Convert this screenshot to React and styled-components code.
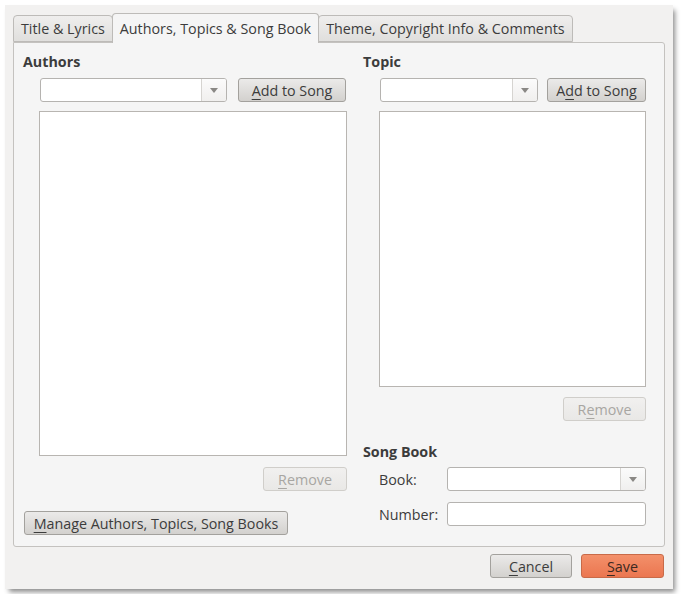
import styled, { createGlobalStyle, css } from "styled-components"

const Global = createGlobalStyle`
  body {
    margin: 0;
    background: #ffffff;
    font-family: "Open Sans", "Noto Sans", sans-serif;
    font-size: 14.3px;
    color: #3c3c3c;
  }
`

const Dialog = styled.div`
  margin: 5px;
  width: 668px;
  box-sizing: border-box;
  background: #f2f1f0;
  box-shadow: 3px 4px 5px -1px rgba(0, 0, 0, 0.45);
  padding: 8px 9px 11px 8px;
  display: flex;
  flex-direction: column;
`

const TabBar = styled.div`
  display: flex;
  align-items: flex-end;
  height: 29px;
  position: relative;
  z-index: 1;
`

const Tab = styled.div`
  box-sizing: border-box;
  height: ${({ active }) => (active ? "30px" : "27px")};
  margin-bottom: ${({ active }) => (active ? "-1px" : "0")};
  padding: 0 7px;
  display: flex;
  align-items: center;
  border: 1px solid #bdbbb8;
  border-bottom: ${({ active }) => (active ? "none" : "1px solid #bdbbb8")};
  border-radius: 4px 4px 0 0;
  margin-left: -1px;
  background: ${({ active }) =>
    active ? "#f5f5f5" : "linear-gradient(#efeeed, #e0dfdd)"};
  white-space: nowrap;
  &:first-child {
    margin-left: 0;
  }
`

const Panel = styled.div`
  box-sizing: border-box;
  width: 652px;
  background: #f5f5f5;
  border: 1px solid #c4c2bf;
  border-radius: 0 3px 3px 3px;
  padding: 9px 18px 11px 9px;
  display: grid;
  grid-template-columns: 324px 283px;
  column-gap: 16px;
`

const Column = styled.div`
  display: flex;
  flex-direction: column;
`

const Heading = styled.div`
  font-weight: bold;
  line-height: 20px;
  height: 20px;
  margin-top: ${({ top }) => top ?? 0}px;
`

const Row = styled.div`
  display: flex;
  align-items: center;
  gap: ${({ gap }) => gap ?? 10}px;
  margin-left: ${({ indent }) => indent ?? 0}px;
  margin-top: ${({ top }) => top ?? 0}px;
`

const ComboBox = styled.div`
  box-sizing: border-box;
  flex: none;
  width: ${({ w }) => w}px;
  height: 24px;
  display: flex;
  background: #ffffff;
  border: 1px solid #b5b3b0;
  border-radius: 3px;
  overflow: hidden;
`

const ComboText = styled.div`
  flex: 1;
`

const ComboArrow = styled.div`
  width: 24px;
  border-left: 1px solid #d6d4d1;
  background: linear-gradient(#fbfbfb, #f0efee);
  display: flex;
  align-items: center;
  justify-content: center;
  &::after {
    content: "";
    border-left: 4px solid transparent;
    border-right: 4px solid transparent;
    border-top: 5px solid #8a8885;
    margin-top: 1px;
  }
`

const TextInput = styled.div`
  box-sizing: border-box;
  flex: none;
  width: ${({ w }) => w}px;
  height: 24px;
  background: #ffffff;
  border: 1px solid #b5b3b0;
  border-radius: 3px;
`

const Button = styled.div`
  box-sizing: border-box;
  flex: none;
  width: ${({ w }) => w}px;
  height: 24px;
  border-radius: 3px;
  display: flex;
  align-items: center;
  justify-content: center;
  white-space: nowrap;
  border: 1px solid #a3a19d;
  background: linear-gradient(#ebeae9, #d3d1ce);
  color: #3c3c3c;
  ${({ disabled }) =>
    disabled &&
    css`
      border-color: #d0ceca;
      background: linear-gradient(#f1f0ef, #e9e8e6);
      color: #a8a6a2;
    `}
  ${({ primary }) =>
    primary &&
    css`
      border-color: #c86a48;
      background: linear-gradient(#f3906a, #eb7650);
      color: #3c2a22;
    `}
  u {
    text-decoration-thickness: 1px;
    text-underline-offset: 3px;
  }
`

const ListBox = styled.div`
  box-sizing: border-box;
  width: ${({ w }) => w}px;
  height: ${({ h }) => h}px;
  background: #ffffff;
  border: 1px solid #b8b5b1;
  margin-left: ${({ indent }) => indent ?? 0}px;
  margin-top: 9px;
`

const ButtonRow = styled.div`
  display: flex;
  justify-content: ${({ align }) => align || "flex-end"};
  margin-top: ${({ top }) => top ?? 0}px;
  margin-left: ${({ indent }) => indent ?? 0}px;
`

const FieldLabel = styled.div`
  flex: none;
  width: 68px;
`

const Footer = styled.div`
  display: flex;
  justify-content: flex-end;
  gap: 9px;
  margin-top: 7px;
`

export default function App() {
  return (
    <>
      <Global />
      <Dialog>
        <TabBar>
          <Tab>Title &amp; Lyrics</Tab>
          <Tab active>Authors, Topics &amp; Song Book</Tab>
          <Tab>Theme, Copyright Info &amp; Comments</Tab>
        </TabBar>
        <Panel>
          <Column>
            <Heading>Authors</Heading>
            <Row indent={17} top={6} gap={11}>
              <ComboBox w={187}>
                <ComboText />
                <ComboArrow />
              </ComboBox>
              <Button w={108}>
                <span><u>A</u>dd to Song</span>
              </Button>
            </Row>
            <ListBox indent={16} w={308} h={345} />
            <ButtonRow top={11}>
              <Button w={84} disabled>
                <span><u>R</u>emove</span>
              </Button>
            </ButtonRow>
            <ButtonRow top={20} indent={1} align="flex-start">
              <Button w={264}>
                <span><u>M</u>anage Authors, Topics, Song Books</span>
              </Button>
            </ButtonRow>
          </Column>
          <Column>
            <Heading>Topic</Heading>
            <Row indent={17} top={6} gap={9}>
              <ComboBox w={158}>
                <ComboText />
                <ComboArrow />
              </ComboBox>
              <Button w={99}>
                <span>A<u>d</u>d to Song</span>
              </Button>
            </Row>
            <ListBox indent={16} w={267} h={276} />
            <ButtonRow top={10}>
              <Button w={83} disabled>
                <span>R<u>e</u>move</span>
              </Button>
            </ButtonRow>
            <Heading top={21}>Song Book</Heading>
            <Row indent={16} top={5} gap={0}>
              <FieldLabel>Book:</FieldLabel>
              <ComboBox w={199}>
                <ComboText />
                <ComboArrow />
              </ComboBox>
            </Row>
            <Row indent={16} top={11} gap={0}>
              <FieldLabel>Number:</FieldLabel>
              <TextInput w={199} />
            </Row>
          </Column>
        </Panel>
        <Footer>
          <Button w={82}>
            <span><u>C</u>ancel</span>
          </Button>
          <Button w={83} primary>
            <span><u>S</u>ave</span>
          </Button>
        </Footer>
      </Dialog>
    </>
  )
}
